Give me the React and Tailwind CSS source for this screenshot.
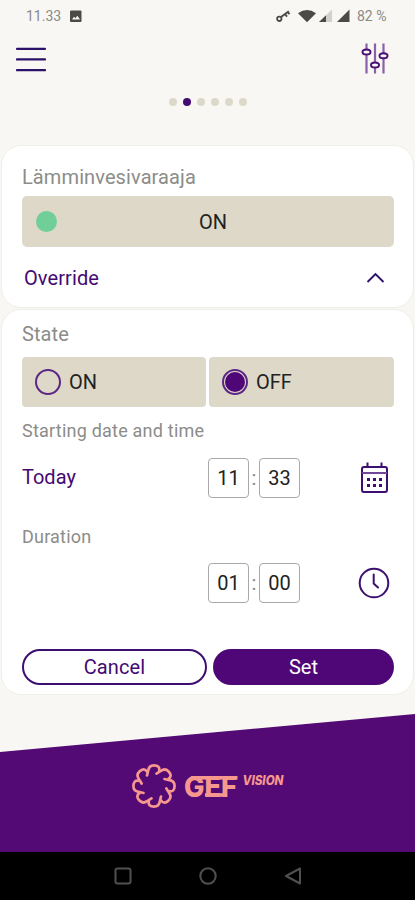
import React from "react";

const PETALS = [0, 45, 90, 135, 180, 225, 270, 315];

function StatusBar() {
  return (
    <div className="flex h-8 items-center pl-[26px] pr-[27px] text-[14px] text-[#8a8a87]">
      <span className="w-[35px] whitespace-nowrap">11.33</span>
      <svg className="ml-[9px]" width="12" height="12" viewBox="0 0 12 12">
        <rect x="0" y="0.5" width="11.5" height="11.5" rx="1" fill="#4a4a49" />
        <path d="M2 9.5 L4 6.7 L5.4 8.3 L7.4 5.8 L10 9.5Z" fill="#f8f7f3" />
      </svg>
      <div className="ml-auto flex items-center">
        <svg width="74" height="16" viewBox="0 0 74 16" fill="none">
          <circle cx="3.3" cy="10.8" r="2.2" stroke="#4a4a49" strokeWidth="1.8" />
          <path d="M5 9 L12.8 3.3 M9 6 L11 8.6 M11.8 4 L13.5 6.2" stroke="#4a4a49" strokeWidth="1.9" />
          <path d="M22 5.3 Q31 -1.2 40 5.3 L31 14.3Z" fill="#4a4a49" />
          <path d="M43 14 L56 1.5 V14Z" fill="#d0d0cc" />
          <path d="M43 14 L50 7.3 V14Z" fill="#4a4a49" />
          <path d="M61 14 L73.500 1.500 V14Z" fill="#4a4a49" />
        </svg>
        <span className="ml-[7px] w-[31px] whitespace-nowrap">82 %</span>
      </div>
    </div>
  );
}

function Header() {
  return (
    <header className="flex h-[54px] items-start justify-between pl-4 pr-[26px]">
      <svg className="mt-[14px]" width="30" height="27" viewBox="0 0 30 27">
        <path d="M1 2.800H29 M1 13.400H29 M1 24.100H29" stroke="#2b1268" strokeWidth="2.200" strokeLinecap="round" />
      </svg>
      <svg className="mt-[11px]" width="28" height="31" viewBox="0 0 28 31" fill="none">
        <path d="M5.500 0.500V30.500 M14 0.500V30.500 M22.500 0.500V30.500" stroke="#8a60ab" strokeWidth="2.200" />
        <g fill="#f8f7f3" stroke="#4b1078" strokeWidth="2">
          <ellipse cx="5.500" cy="9" rx="4" ry="2.500" />
          <ellipse cx="14" cy="22" rx="4" ry="2.500" />
          <ellipse cx="22.500" cy="12.800" rx="4" ry="2.500" />
        </g>
      </svg>
    </header>
  );
}

function Pager() {
  return (
    <div className="flex h-[59px] justify-center gap-1.5 pt-3">
      {[0, 1, 2, 3, 4, 5].map((i) => (
        <span key={i} className={`size-2 rounded-full ${i === 1 ? "bg-[#430a72]" : "bg-[#dcd9ca]"}`} />
      ))}
    </div>
  );
}

function TimeFields({ hours, minutes }) {
  const box = "flex h-10 w-[41px] items-center justify-center rounded-[4px] border border-[#a9a9a9] text-[20px] text-[#222]";
  return (
    <div className="flex items-center">
      <span className={box}>{hours}</span>
      <span className="w-[10px] text-center text-[20px] text-[#8a8a87]">:</span>
      <span className={box}>{minutes}</span>
    </div>
  );
}

function CalendarIcon() {
  return (
    <svg width="28" height="32" viewBox="0 0 28 32" fill="none" stroke="#3c0f70" strokeWidth="2">
      <rect x="2" y="5" width="25" height="25" rx="2" />
      <path d="M2 11H27" stroke="#71479a" />
      <path d="M7.500 0.500V6 M21.500 0.500V6" />
      <path d="M7 17.500H10 M13 17.500H16 M19 17.500H22 M7 23.500H10 M13 23.500H16 M19 23.500H22" strokeWidth="3" />
    </svg>
  );
}

function ClockIcon() {
  return (
    <svg width="32" height="32" viewBox="0 0 32 32" fill="none" stroke="#3c0f70" strokeWidth="2" strokeLinecap="round">
      <circle cx="16" cy="16" r="14.300" />
      <path d="M15.700 7.500V16.500L20 20.500" />
    </svg>
  );
}

function Footer() {
  return (
    <footer className="h-[138px] bg-[#530a75] pt-[46px] [clip-path:polygon(0_38px,100%_0,100%_100%,0_100%)]">
      <div className="flex items-start pl-[131px] text-[#f6988e]">
        <svg className="mt-[3px]" width="46" height="46" viewBox="-23 -23 46 46" fill="none" stroke="currentColor" strokeWidth="2.700" strokeLinecap="round" strokeLinejoin="round">
          {PETALS.map((a) => (
            <path key={a} transform={`rotate(${a})`} d="M-7 -10.500 L-5.800 -15.500 C-5.300 -18.800 -3.500 -20.600 0 -20.600 C4 -20.600 6 -18.500 5.200 -15.500" />
          ))}
        </svg>
        <svg width="110" height="46" viewBox="0 0 110 46" fill="currentColor" fontFamily="Inter, sans-serif">
          <text x="7" y="36.800" fontSize="28.500" fontWeight="800" textLength="53" lengthAdjust="spacingAndGlyphs">GEF</text>
          <rect x="14" y="16" width="46.500" height="3.600" />
          <rect x="28" y="33.200" width="22" height="3.600" />
          <text x="65.500" y="25" fontSize="12.500" fontWeight="800" fontStyle="italic" textLength="41" lengthAdjust="spacingAndGlyphs">VISION</text>
        </svg>
      </div>
    </footer>
  );
}

function NavBar() {
  return (
    <nav className="flex h-12 items-center justify-between bg-black pl-[114px] pr-[113px]">
      <svg width="18" height="18" viewBox="0 0 18 18" fill="none" stroke="#505050" strokeWidth="2">
        <rect x="1.500" y="1.500" width="15" height="15" rx="2" />
      </svg>
      <svg width="18" height="18" viewBox="0 0 18 18" fill="none" stroke="#505050" strokeWidth="2">
        <circle cx="9" cy="9" r="7.700" />
      </svg>
      <svg width="18" height="18" viewBox="0 0 18 18" fill="none" stroke="#505050" strokeWidth="2" strokeLinejoin="round">
        <path d="M2 9L16 1.500V16.500Z" />
      </svg>
    </nav>
  );
}

export default function App() {
  return (
    <div className="flex h-[900px] w-[415px] flex-col overflow-hidden bg-[#f8f7f3] font-[Roboto,sans-serif]">
      <StatusBar />
      <Header />
      <Pager />

      <main className="flex h-[569px] flex-col px-px">
        <section className="h-[163px] rounded-[20px] border border-[#efeeea] bg-white pl-5 pr-[19px] pt-[17px]">
          <h1 className="h-[33px] text-[20px] leading-[28px] tracking-[0.1px] text-[#8c8c89]">Lämminvesivaraaja</h1>
          <div className="flex h-[51px] items-center rounded-[5px] bg-[#ded8c8]">
            <span className="ml-[14px] size-[21px] rounded-full bg-[#70cf98]" />
            <span className="ml-[142px] text-[20px] leading-[28px] text-[#222]">ON</span>
          </div>
          <div className="flex h-[61px] items-center justify-between pl-0.5 pr-[9px] text-[20px] tracking-[0.1px] text-[#430a72]">
            <span>Override</span>
            <svg width="19" height="12" viewBox="0 0 19 12" fill="none" stroke="#2b1268" strokeWidth="1.900">
              <path d="M1.500 10L9.500 2L17.500 10" />
            </svg>
          </div>
        </section>

        <section className="mt-px h-[386px] rounded-[20px] border border-[#efeeea] bg-white pl-5 pr-[19px]">
          <h2 className="h-[47px] pt-[10px] text-[20px] leading-[28px] tracking-[0.1px] text-[#8c8c89]">State</h2>
          <div className="flex h-[50px] gap-[3px] text-[20px] text-[#222]">
            <div className="flex w-[184px] items-center rounded-[4px] bg-[#ded8c8] pl-[13px]">
              <span className="mr-2 size-[26px] rounded-full border-2 border-[#5b2785]" />
              ON
            </div>
            <div className="flex flex-1 items-center rounded-[4px] bg-[#ded8c8] pl-[13px]">
              <span className="mr-[8px] flex size-[26px] items-center justify-center rounded-full border-2 border-[#5b2785]">
                <span className="size-[20px] rounded-full bg-[#4f0778]" />
              </span>
              OFF
            </div>
          </div>
          <h3 className="h-[50px] pt-[10px] text-[18px] leading-[28px] tracking-[0.22px] text-[#8c8c89]">Starting date and time</h3>
          <div className="flex h-[42px] items-center">
            <span className="w-[186px] pb-0.5 text-[20px] text-[#430a72]">Today</span>
            <TimeFields hours="11" minutes="33" />
            <span className="ml-auto mr-[6px]"><CalendarIcon /></span>
          </div>
          <h3 className="h-[63px] pt-[24px] text-[18px] leading-[28px] tracking-[0.2px] text-[#8c8c89]">Duration</h3>
          <div className="flex h-[42px] items-center pl-[186px]">
            <TimeFields hours="01" minutes="00" />
            <span className="ml-auto mr-[4px]"><ClockIcon /></span>
          </div>
          <div className="flex gap-[6px] pt-[45px] text-[20px]">
            <button className="h-[36px] w-[185px] rounded-full border-2 border-[#3c0f70] tracking-[0.1px] text-[#430a72]">Cancel</button>
            <button className="h-[36px] flex-1 rounded-full bg-[#4f0778] text-white">Set</button>
          </div>
        </section>
      </main>

      <Footer />
      <NavBar />
    </div>
  );
}
